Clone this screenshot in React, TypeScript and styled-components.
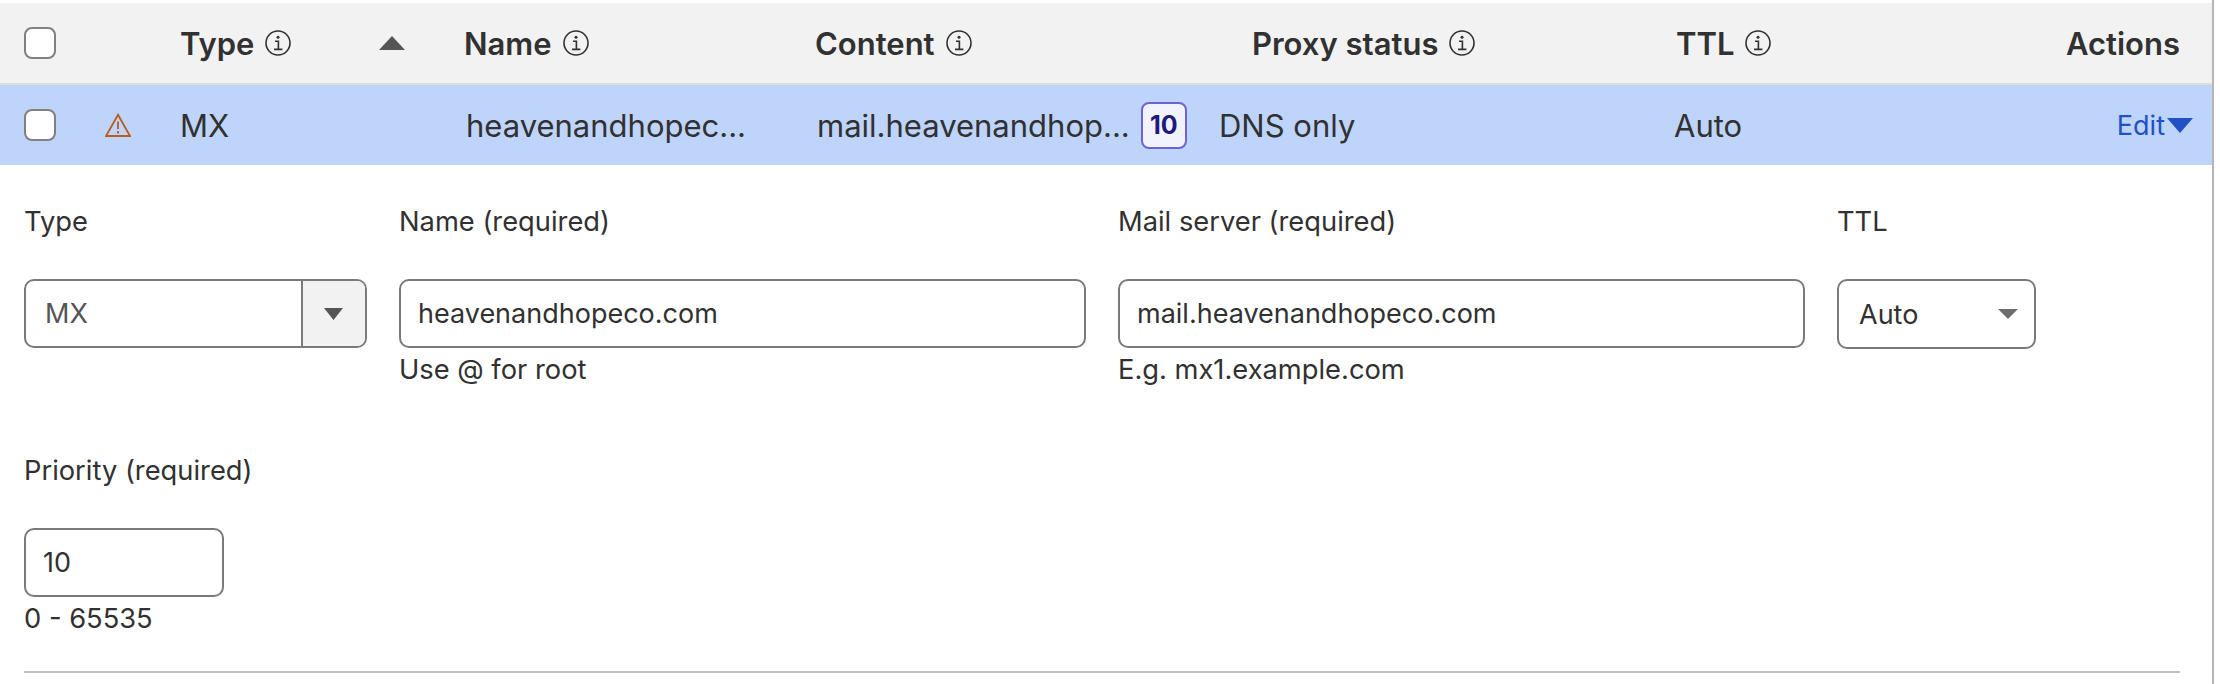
import styled, { createGlobalStyle } from 'styled-components';

const Global = createGlobalStyle`
    html, body {
        margin: 0;
        padding: 0;
        background: #ffffff;
    }
    * {
        box-sizing: border-box;
    }
`;

const Page = styled.div`
    width: 2220px;
    height: 684px;
    overflow: hidden;
    font-family: Inter, 'Liberation Sans', sans-serif;
    color: #313131;
    font-size: 27.3px;
`;

const Panel = styled.div`
    width: 2214px;
    height: 684px;
    padding-top: 3px;
    border-right: 2px solid #b5b5b5;
`;

const Row = styled.div<{ $head?: boolean }>`
    display: grid;
    grid-template-columns: 24px 81px 75px 284px 351px 404px 455px 1fr;
    align-items: center;
    height: ${(p) => (p.$head ? '82px' : '80px')};
    font-size: 31px;
    background: ${(p) => (p.$head ? '#f2f2f2' : '#bfd4fb')};
    border-bottom: ${(p) => (p.$head ? '2px solid #dedede' : 'none')};
`;

const Check = styled.span`
    display: block;
    width: 32px;
    height: 32px;
    background: #ffffff;
    border: 2px solid #808080;
    border-radius: 8px;
`;

const HeadCell = styled.div<{ $start: number; $indent?: number }>`
    grid-row: 1;
    grid-column: ${(p) => p.$start};
    padding-left: ${(p) => p.$indent ?? 0}px;
    display: flex;
    align-items: center;
    gap: 11px;
    font-weight: 600;
    white-space: nowrap;
`;

const ActionsHead = styled(HeadCell)`
    justify-content: flex-end;
    padding-right: 32px;
`;

const SortMark = styled.span`
    display: flex;
    margin-left: auto;
    margin-right: 59px;
`;

const Cell = styled.div<{ $start: number; $indent?: number }>`
    grid-row: 1;
    grid-column: ${(p) => p.$start};
    padding-left: ${(p) => p.$indent ?? 0}px;
    display: flex;
    align-items: center;
    white-space: nowrap;
`;

const Badge = styled.span`
    display: flex;
    align-items: center;
    justify-content: center;
    width: 46px;
    height: 47px;
    margin-left: 11px;
    background: #f2f2fd;
    border: 2px solid #6c63d8;
    border-radius: 8px;
    color: #1d1a7e;
    font-size: 25px;
    font-weight: 700;
`;

const EditLink = styled.div`
    grid-row: 1;
    grid-column: 8;
    display: flex;
    align-items: center;
    justify-content: flex-end;
    gap: 2px;
    padding-right: 19px;
    color: #2151c4;
    font-size: 27px;
`;

const Form = styled.div`
    padding-left: 24px;
`;

const FieldRow = styled.div`
    display: flex;
    align-items: flex-start;
    gap: 32.5px;
    padding-top: 39px;
`;

const SecondRow = styled(FieldRow)`
    padding-top: 63px;
`;

const Field = styled.div<{ $w: number }>`
    width: ${(p) => p.$w}px;
    flex: none;
`;

const Label = styled.div`
    height: 34px;
    line-height: 36px;
    margin-bottom: 41px;
    white-space: nowrap;
`;

const Box = styled.div<{ $muted?: boolean }>`
    display: flex;
    align-items: center;
    height: 69px;
    padding-left: 17px;
    background: #ffffff;
    border: 2px solid #7a7a7a;
    border-radius: 10px;
    overflow: hidden;
    font-size: 27px;
    color: ${(p) => (p.$muted ? '#555555' : '#313131')};
`;

const TypeSelect = styled(Box)`
    justify-content: space-between;
    padding-left: 19px;
`;

const TtlSelect = styled(Box)`
    justify-content: space-between;
    height: 70px;
    padding-left: 20px;
`;

const Caret = styled.span`
    display: flex;
    align-items: center;
    justify-content: center;
    align-self: stretch;
    width: 64px;
    background: #f2f2f2;
    border-left: 2px solid #7a7a7a;
`;

const NativeCaret = styled.span`
    display: flex;
    margin-right: 16px;
`;

const Help = styled.div`
    height: 40px;
    line-height: 40px;
    margin-top: 2px;
    white-space: nowrap;
`;

const Divider = styled.div`
    width: 2156px;
    height: 2px;
    margin-top: 32px;
    background: #bdbdbd;
`;

const InfoIcon = () => (
    <svg width="26" height="26" viewBox="0 0 26 26" fill="none" stroke="#313131" strokeWidth="1.6">
        <circle cx="13" cy="13" r="12" />
        <path d="M10 11.2h3.4v8M9 19.4h8.4" />
        <circle cx="13" cy="7.2" r="1.5" fill="#313131" stroke="none" />
    </svg>
);

const Triangle = ({ w, h, color, up }: { w: number; h: number; color: string; up?: boolean }) => (
    <svg width={w} height={h} viewBox="0 0 26 14" preserveAspectRatio="none">
        <path d={up ? 'M13 0L26 14H0Z' : 'M0 0H26L13 14Z'} fill={color} />
    </svg>
);

const WarnIcon = () => (
    <svg width="26" height="24" viewBox="0 0 26 24" fill="none" stroke="#b85c1f" strokeWidth="1.8">
        <path d="M13 1.8L25 23H1Z" />
        <path d="M13 8.5V16M13 18V20.5" />
    </svg>
);

export default function App() {
    return (
        <Page>
            <Global />
            <Panel>
                <Row $head>
                    <HeadCell $start={2}>
                        <Check />
                    </HeadCell>
                    <HeadCell $start={4}>
                        Type <InfoIcon />
                        <SortMark>
                            <Triangle w={26} h={14} color="#555555" up />
                        </SortMark>
                    </HeadCell>
                    <HeadCell $start={5}>
                        Name <InfoIcon />
                    </HeadCell>
                    <HeadCell $start={6}>
                        Content <InfoIcon />
                    </HeadCell>
                    <HeadCell $start={7} $indent={33}>
                        Proxy status <InfoIcon />
                    </HeadCell>
                    <HeadCell $start={8} $indent={2}>
                        TTL <InfoIcon />
                    </HeadCell>
                    <ActionsHead $start={8}>Actions</ActionsHead>
                </Row>
                <Row>
                    <Cell $start={2}>
                        <Check />
                    </Cell>
                    <Cell $start={3}>
                        <WarnIcon />
                    </Cell>
                    <Cell $start={4}>MX</Cell>
                    <Cell $start={5} $indent={2}>
                        heavenandhopec...
                    </Cell>
                    <Cell $start={6} $indent={2}>
                        mail.heavenandhop...
                        <Badge>10</Badge>
                    </Cell>
                    <Cell $start={7}>DNS only</Cell>
                    <Cell $start={8}>Auto</Cell>
                    <EditLink>
                        Edit
                        <Triangle w={26} h={15} color="#2151c4" />
                    </EditLink>
                </Row>
                <Form>
                    <FieldRow>
                        <Field $w={342.5}>
                            <Label>Type</Label>
                            <TypeSelect $muted>
                                MX
                                <Caret>
                                    <Triangle w={19} h={12} color="#555555" />
                                </Caret>
                            </TypeSelect>
                        </Field>
                        <Field $w={686.5}>
                            <Label>Name (required)</Label>
                            <Box>heavenandhopeco.com</Box>
                            <Help>Use @ for root</Help>
                        </Field>
                        <Field $w={686.5}>
                            <Label>Mail server (required)</Label>
                            <Box>mail.heavenandhopeco.com</Box>
                            <Help>E.g. mx1.example.com</Help>
                        </Field>
                        <Field $w={199}>
                            <Label>TTL</Label>
                            <TtlSelect>
                                Auto
                                <NativeCaret>
                                    <Triangle w={20} h={10} color="#6e6e6e" />
                                </NativeCaret>
                            </TtlSelect>
                        </Field>
                    </FieldRow>
                    <SecondRow>
                        <Field $w={200}>
                            <Label>Priority (required)</Label>
                            <Box>10</Box>
                            <Help>0 - 65535</Help>
                        </Field>
                    </SecondRow>
                    <Divider />
                </Form>
            </Panel>
        </Page>
    );
}
